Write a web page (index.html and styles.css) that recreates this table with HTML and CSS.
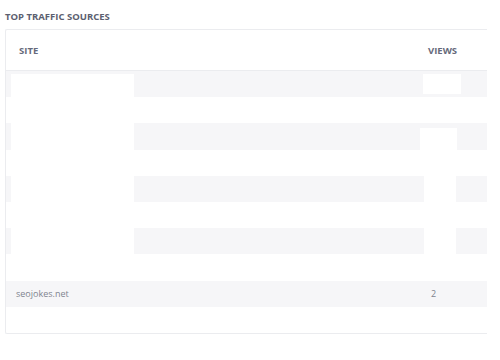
FILE: index.html
```html
<!DOCTYPE html>
<html>
<head>
<meta charset="utf-8">
<link rel="stylesheet" href="styles.css">
</head>
<body>
<div class="widget">
  <h3 class="title">TOP TRAFFIC SOURCES</h3>
  <div class="card">
    <div class="row head">
      <div class="c-site">SITE</div>
      <div class="c-views">VIEWS</div>
    </div>
    <div class="row odd"><div class="c-site"></div><div class="c-views"></div></div>
    <div class="row"><div class="c-site"></div><div class="c-views"></div></div>
    <div class="row odd"><div class="c-site"></div><div class="c-views"></div></div>
    <div class="row"><div class="c-site"></div><div class="c-views"></div></div>
    <div class="row odd"><div class="c-site"></div><div class="c-views"></div></div>
    <div class="row"><div class="c-site"></div><div class="c-views"></div></div>
    <div class="row odd"><div class="c-site"></div><div class="c-views"></div></div>
    <div class="row"><div class="c-site"></div><div class="c-views"></div></div>
    <div class="row odd"><div class="c-site">seojokes.net</div><div class="c-views">2</div></div>
    <div class="row"><div class="c-site"></div><div class="c-views"></div></div>
    <div class="mask m1"></div>
    <div class="mask m2"></div>
    <div class="mask m3"></div>
    <div class="mask m4"></div>
  </div>
</div>
</body>
</html>
```
FILE: styles.css
```css
html, body {
  margin: 0;
  padding: 0;
  background: #fff;
}
body {
  font-family: "Open Sans", "Liberation Sans", sans-serif;
  width: 500px;
  height: 360px;
  overflow: hidden;
}
.widget {
  padding: 8px 0 0 5px;
}
.title {
  margin: 0;
  height: 21px;
  font-size: 9.5px;
  font-weight: 700;
  color: #5c6070;
  line-height: 17px;
}
.card {
  position: relative;
  width: 481px;
  border: 1px solid #ebecef;
  border-right: none;
  border-radius: 2px 0 0 2px;
}
.row {
  display: flex;
  align-items: center;
  height: 26.2px;
  font-size: 9px;
  color: #80848f;
}
.row.odd {
  background: #f6f6f8;
}
.row.head {
  height: 40px;
  border-bottom: 1px solid #ebecef;
  font-weight: 700;
  font-size: 9.5px;
  color: #666a7b;
}
.c-site {
  flex: 1;
  padding-left: 10px;
}
.head .c-site {
  padding-left: 13px;
}
.c-views {
  width: 56px;
}
.head .c-views {
  width: 59px;
}
.mask {
  position: absolute;
  background: #fff;
}
.m1 { left: 5px; top: 44px; width: 123px; height: 181px; }
.m2 { left: 417px; top: 44px; width: 38px; height: 20px; }
.m3 { left: 414px; top: 98px; width: 37px; height: 23px; }
.m4 { left: 418px; top: 120px; width: 32px; height: 105px; }
```
